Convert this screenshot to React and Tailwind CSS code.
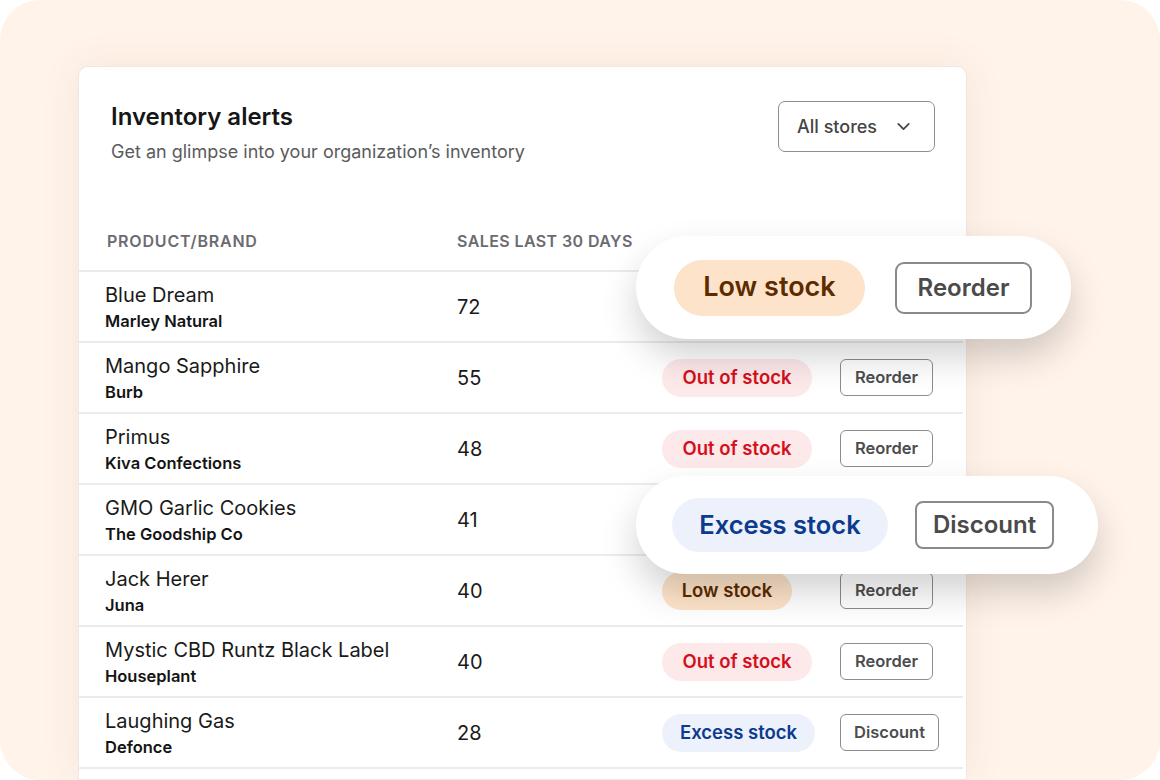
import React from "react";
import { ChevronDown } from "lucide-react";

const ROWS = [
  { name: "Blue Dream", brand: "Marley Natural", sales: 72, status: "low", covered: true },
  { name: "Mango Sapphire", brand: "Burb", sales: 55, status: "out" },
  { name: "Primus", brand: "Kiva Confections", sales: 48, status: "out" },
  { name: "GMO Garlic Cookies", brand: "The Goodship Co", sales: 41, status: "excess", covered: true },
  { name: "Jack Herer", brand: "Juna", sales: 40, status: "low" },
  { name: "Mystic CBD Runtz Black Label", brand: "Houseplant", sales: 40, status: "out" },
  { name: "Laughing Gas", brand: "Defonce", sales: 28, status: "excess" },
];

function StatusPill({ status }) {
  if (status === "out") {
    return (
      <span className="inline-flex h-[38px] w-[150px] items-center justify-center rounded-full bg-[#fde8ea] text-[18.5px] font-semibold text-[#d3101c]">
        Out of stock
      </span>
    );
  }
  if (status === "excess") {
    return (
      <span className="inline-flex h-[38px] w-[153px] items-center justify-center rounded-full bg-[#edf1fb] text-[18.5px] font-semibold text-[#0c3a8e]">
        Excess stock
      </span>
    );
  }
  return (
    <span className="inline-flex h-[38px] w-[130px] items-center justify-center rounded-full bg-[#fde3c9] text-[18.5px] font-semibold text-[#5c2b00]">
      Low stock
    </span>
  );
}

function ActionButton({ status }) {
  const excess = status === "excess";
  return (
    <button
      className={
        excess
          ? "h-[37px] w-[99px] rounded-[6px] border-[1.5px] border-[#8c8c8c] bg-white text-[16.5px] font-semibold text-[#4d4d4d]"
          : "h-[37px] w-[93px] rounded-[6px] border-[1.5px] border-[#8c8c8c] bg-white text-[16.5px] font-semibold text-[#4d4d4d]"
      }
    >
      {excess ? "Discount" : "Reorder"}
    </button>
  );
}

export default function App() {
  return (
    <div
      className="relative h-[780px] w-[1160px] overflow-hidden bg-white"
      style={{ fontFamily: "Inter, 'Noto Sans', sans-serif" }}
    >
      <div className="h-full rounded-[40px] bg-[#fff3ea] pl-[78px] pt-[66px]">
        <div className="h-[714px] w-[889px] overflow-hidden rounded-t-[10px] border border-[#efe7e1] bg-white shadow-[0_0_40px_rgba(140,80,30,0.08)]">
          {/* Header */}
          <div className="flex items-start justify-between pl-[32px] pr-[31px] pt-[34px]">
            <div>
              <h1 className="text-[24px] font-semibold leading-[32px] text-[#161616]">Inventory alerts</h1>
              <p className="mt-[5px] text-[18px] leading-[28px] text-[#5b5b5b]">
                Get an glimpse into your organization’s inventory
              </p>
            </div>
            <button className="flex h-[51px] w-[157px] items-center gap-[16px] rounded-[7px] border-[1.5px] border-[#8e8e8e] pl-[18px] text-[18px] font-medium text-[#454545]">
              All stores
              <ChevronDown size={21} strokeWidth={2} className="text-[#454545]" />
            </button>
          </div>

          {/* Table header */}
          <div className="mt-[46px] grid h-[60px] grid-cols-[350px_205px_178px_1fr] items-center border-b-2 border-[#ebebef] pl-[28px] text-[16px] font-semibold text-[#6b6b70]">
            <span className="tracking-[0.8px]">PRODUCT/BRAND</span>
            <span className="tracking-[0.4px]">SALES LAST 30 DAYS</span>
            <span></span>
            <span></span>
          </div>

          {/* Rows */}
          {ROWS.map((r) => (
            <div
              key={r.name}
              className="mr-[3px] grid h-[71px] grid-cols-[352px_205px_178px_1fr] items-center border-b-2 border-[#ebebef] pl-[26px]"
            >
              <div>
                <div className="text-[20px] leading-[28px] text-[#1a1a1a]">{r.name}</div>
                <div className="text-[16.5px] font-semibold leading-[24px] text-[#141414]">{r.brand}</div>
              </div>
              <div className="text-[20px] text-[#1a1a1a]">{r.sales}</div>
              <div className={r.covered ? "invisible" : ""}>
                <StatusPill status={r.status} />
              </div>
              <div className={r.covered ? "invisible" : ""}>
                <ActionButton status={r.status} />
              </div>
            </div>
          ))}
        </div>
      </div>

      {/* Floating callout: low stock */}
      <div className="absolute left-[636px] top-[236px] flex h-[103px] w-[435px] items-center gap-[30px] rounded-full bg-white pl-[38px] shadow-[0_18px_36px_rgba(0,0,0,0.18)]">
        <span className="inline-flex h-[56px] w-[191px] items-center justify-center rounded-full bg-[#fde3c9] text-[27px] font-semibold text-[#5c2b00]">
          Low stock
        </span>
        <span className="inline-flex h-[52px] w-[137px] items-center justify-center rounded-[9px] border-2 border-[#8a8a8a] text-[24px] font-semibold text-[#4a4a4a]">
          Reorder
        </span>
      </div>

      {/* Floating callout: excess stock */}
      <div className="absolute left-[636px] top-[476px] flex h-[98px] w-[462px] items-center gap-[27px] rounded-full bg-white pl-[36px] shadow-[0_18px_36px_rgba(0,0,0,0.18)]">
        <span className="inline-flex h-[54px] w-[216px] items-center justify-center rounded-full bg-[#edf1fb] text-[25.5px] font-semibold text-[#0c3a8e]">
          Excess stock
        </span>
        <span className="inline-flex h-[48px] w-[139px] items-center justify-center rounded-[8px] border-2 border-[#8a8a8a] text-[24px] font-semibold text-[#4a4a4a]">
          Discount
        </span>
      </div>
    </div>
  );
}
